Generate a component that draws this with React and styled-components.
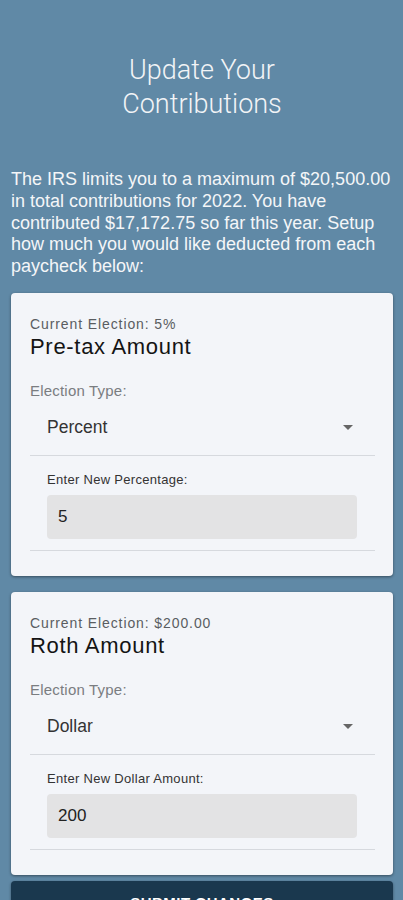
import React from "react";
import styled, { createGlobalStyle } from "styled-components";

const Global = createGlobalStyle`
  html, body { margin: 0; padding: 0; background: #6089a6; }
  body { font-family: "Liberation Sans", Arial, sans-serif; }
  * { box-sizing: border-box; }
`;

const Page = styled.div`
  min-height: 900px;
  background: #6089a6;
  padding: 53px 10px 0 11px;
  display: flex;
  flex-direction: column;
`;

const Title = styled.h1`
  margin: 0;
  font-family: Roboto, "Liberation Sans", sans-serif;
  font-weight: 300;
  font-size: 27px;
  line-height: 34px;
  color: #f2f4f6;
  text-align: center;
`;

const Intro = styled.p`
  margin: 48px 0 15px;
  font-size: 18px;
  line-height: 21.8px;
  color: #f4f6f8;
`;

const Cards = styled.div`
  display: flex;
  flex-direction: column;
  gap: 16px;
`;

const Card = styled.section`
  background: #f3f5f9;
  border-radius: 4px;
  box-shadow: 0 1px 3px rgba(0, 0, 0, 0.45);
  padding: 23px 18px 25px 19px;
  display: flex;
  flex-direction: column;
`;

const Current = styled.div`
  font-size: 14px;
  line-height: 17px;
  letter-spacing: 0.9px;
  color: #5a5d61;
`;

const CardTitle = styled.h2`
  margin: 0;
  font-size: 22px;
  font-weight: 400;
  line-height: 27px;
  letter-spacing: 0.7px;
  color: #141414;
`;

const FieldLabel = styled.div`
  margin-top: 22px;
  font-size: 15px;
  line-height: 18px;
  letter-spacing: 0.2px;
  color: #7a7d81;
`;

const Select = styled.div`
  display: flex;
  align-items: center;
  justify-content: space-between;
  height: 56px;
  padding: 0 22px 0 17px;
  border-bottom: 1px solid #d6d9de;
  font-size: 17.5px;
  color: #333;
`;

const Caret = styled.span`
  width: 0;
  height: 0;
  border-left: 5px solid transparent;
  border-right: 5px solid transparent;
  border-top: 5px solid #666;
`;

const InputBlock = styled.div`
  padding: 16px 18px 11px 17px;
  border-bottom: 1px solid #d6d9de;
`;

const InputLabel = styled.div`
  font-size: 13px;
  line-height: 16px;
  letter-spacing: 0.3px;
  color: #333;
  margin-bottom: 7px;
`;

const Input = styled.div`
  height: 44px;
  background: #e3e3e4;
  border-radius: 4px;
  padding: 0 11px;
  display: flex;
  align-items: center;
  font-size: 17px;
  color: #222;
`;

const Submit = styled.button`
  margin-top: 6px;
  height: 44px;
  border: none;
  border-radius: 4px;
  background: #1a384e;
  color: #fff;
  font-family: "Liberation Sans", Arial, sans-serif;
  font-weight: 700;
  font-size: 15px;
  letter-spacing: 0.5px;
  box-shadow: 0 1px 3px rgba(0, 0, 0, 0.4);
`;

function ContributionCard({ current, title, type, inputLabel, value }) {
  return (
    <Card>
      <Current>Current Election: {current}</Current>
      <CardTitle>{title}</CardTitle>
      <FieldLabel>Election Type:</FieldLabel>
      <Select>
        <span>{type}</span>
        <Caret />
      </Select>
      <InputBlock>
        <InputLabel>{inputLabel}</InputLabel>
        <Input>{value}</Input>
      </InputBlock>
    </Card>
  );
}

export default function App() {
  return (
    <>
      <Global />
      <Page>
        <Title>
          Update Your
          <br />
          Contributions
        </Title>
        <Intro>
          The IRS limits you to a maximum of $20,500.00 in total contributions
          for 2022. You have contributed $17,172.75 so far this year. Setup how
          much you would like deducted from each paycheck below:
        </Intro>
        <Cards>
          <ContributionCard
            current="5%"
            title="Pre-tax Amount"
            type="Percent"
            inputLabel="Enter New Percentage:"
            value="5"
          />
          <ContributionCard
            current="$200.00"
            title="Roth Amount"
            type="Dollar"
            inputLabel="Enter New Dollar Amount:"
            value="200"
          />
        </Cards>
        <Submit>SUBMIT CHANGES</Submit>
      </Page>
    </>
  );
}
